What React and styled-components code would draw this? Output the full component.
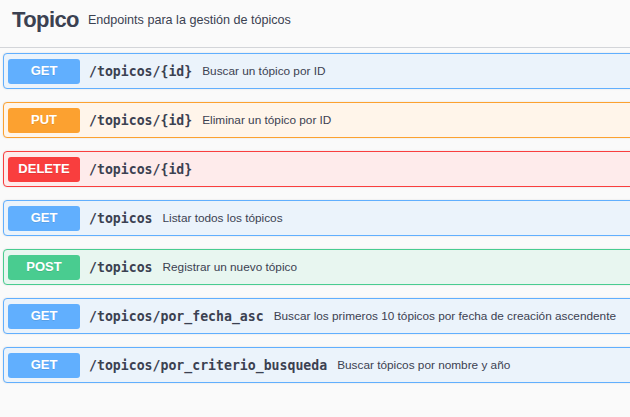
import React from 'react';
import styled, { createGlobalStyle } from 'styled-components';

const methods = {
  GET: { main: '#61affe', bg: '#ebf3fb' },
  PUT: { main: '#fca130', bg: '#fff5ea' },
  DELETE: { main: '#f93e3e', bg: '#feebeb' },
  POST: { main: '#49cc90', bg: '#e8f6f0' },
};

const endpoints = [
  { method: 'GET', path: '/topicos/{id}', summary: 'Buscar un tópico por ID' },
  { method: 'PUT', path: '/topicos/{id}', summary: 'Eliminar un tópico por ID' },
  { method: 'DELETE', path: '/topicos/{id}', summary: '' },
  { method: 'GET', path: '/topicos', summary: 'Listar todos los tópicos' },
  { method: 'POST', path: '/topicos', summary: 'Registrar un nuevo tópico' },
  {
    method: 'GET',
    path: '/topicos/por_fecha_asc',
    summary: 'Buscar los primeros 10 tópicos por fecha de creación ascendente',
  },
  {
    method: 'GET',
    path: '/topicos/por_criterio_busqueda',
    summary: 'Buscar tópicos por nombre y año',
  },
];

const GlobalStyle = createGlobalStyle`
  html, body {
    margin: 0;
    padding: 0;
    background: #fafafa;
    font-family: "Liberation Sans", Arial, sans-serif;
    color: #3b4151;
  }
`;

const Page = styled.div`
  width: 630px;
  height: 417px;
  overflow: hidden;
  background: #fafafa;
`;

const TagHeader = styled.div`
  display: flex;
  align-items: center;
  gap: 9px;
  height: 48px;
  padding: 0 12px 7px;
  border-bottom: 1px solid #d3d5d9;
  box-sizing: border-box;
`;

const TagName = styled.span`
  font-size: 22px;
  font-weight: bold;
  letter-spacing: -0.6px;
  color: #3b4151;
`;

const TagDesc = styled.span`
  font-size: 12.6px;
  color: #3b4151;
`;

const List = styled.div`
  display: flex;
  flex-direction: column;
  gap: 13px;
  padding: 5px 0 0 3px;
  width: 680px;
`;

const Block = styled.div`
  display: flex;
  align-items: center;
  height: 36px;
  box-sizing: border-box;
  padding: 0 4px;
  border: 1px solid ${(p) => methods[p.method].main};
  border-radius: 4px;
  background: ${(p) => methods[p.method].bg};
  box-shadow: 0 0 2px rgba(0, 0, 0, 0.12);
`;

const Badge = styled.span`
  flex: none;
  width: 72px;
  height: 25px;
  line-height: 24px;
  border-radius: 3px;
  background: ${(p) => methods[p.method].main};
  color: #fff;
  font-size: 13px;
  font-weight: bold;
  text-align: center;
  text-shadow: 0 1px 0 rgba(0, 0, 0, 0.1);
`;

const Path = styled.span`
  margin-left: 9px;
  font-family: "DejaVu Sans Mono", "Liberation Mono", monospace;
  font-size: 13.2px;
  font-weight: bold;
  color: #3b4151;
`;

const Summary = styled.span`
  margin-left: 10px;
  font-size: 11.8px;
  color: #3b4151;
`;

export default function App() {
  return (
    <>
      <GlobalStyle />
      <Page>
        <TagHeader>
          <TagName>Topico</TagName>
          <TagDesc>Endpoints para la gestión de tópicos</TagDesc>
        </TagHeader>
        <List>
          {endpoints.map((e, i) => (
            <Block key={i} method={e.method}>
              <Badge method={e.method}>{e.method}</Badge>
              <Path>{e.path}</Path>
              {e.summary && <Summary>{e.summary}</Summary>}
            </Block>
          ))}
        </List>
      </Page>
    </>
  );
}
